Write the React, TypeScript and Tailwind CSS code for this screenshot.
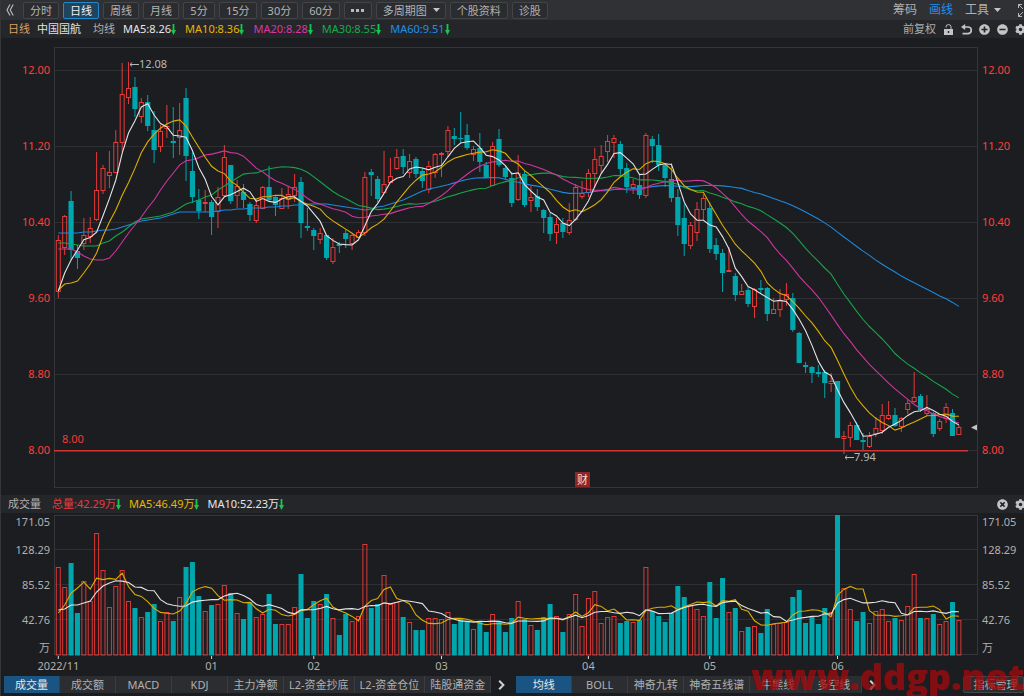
import React from 'react';
import { FaPlusCircle, FaMinusCircle, FaTimesCircle, FaCog } from 'react-icons/fa';

// [dir, high, body top, body bottom, low], all in chart units (95 units = 1.00 yuan, 12.00 sits at 70)
type Candle = [number, number, number, number, number];

const candles: Candle[] = [
  [1, 235, 240, 291, 298], [1, 215, 216, 247, 255], [-1, 191, 201, 250, 260], [-1, 245, 251, 258, 269],
  [1, 218, 235, 243, 250], [1, 217, 228, 236, 243], [1, 152, 190, 219, 221], [1, 165, 168, 190, 194],
  [1, 151, 172, 175, 188], [1, 130, 142, 172, 173], [1, 63, 94, 142, 152], [1, 62, 88, 97, 104],
  [-1, 77, 87, 109, 117], [1, 98, 102, 116, 123], [-1, 95, 102, 126, 131], [-1, 111, 130, 150, 163],
  [1, 125, 131, 146, 152], [1, 105, 126, 128, 138], [-1, 107, 141, 143, 158], [1, 103, 130, 137, 155],
  [-1, 88, 98, 156, 181], [-1, 150, 171, 197, 203], [-1, 189, 200, 211, 219], [1, 190, 202, 203, 212],
  [-1, 200, 202, 217, 235], [1, 187, 197, 211, 228], [1, 145, 157, 195, 197], [-1, 165, 165, 201, 204],
  [1, 180, 186, 195, 208], [-1, 184, 192, 200, 208], [-1, 202, 204, 215, 221], [1, 200, 205, 220, 223],
  [1, 186, 187, 208, 208], [-1, 166, 187, 200, 202], [-1, 196, 197, 205, 216], [1, 188, 198, 208, 208],
  [1, 186, 194, 199, 209], [1, 174, 187, 195, 202], [-1, 177, 182, 223, 238], [-1, 208, 226, 228, 231],
  [-1, 228, 230, 236, 250], [1, 228, 233, 239, 244], [-1, 235, 235, 258, 260], [1, 238, 247, 261, 264],
  [-1, 242, 244, 246, 253], [-1, 230, 233, 239, 248], [1, 234, 235, 243, 250], [1, 230, 232, 237, 238],
  [1, 172, 177, 232, 236], [-1, 169, 172, 175, 196], [-1, 176, 179, 199, 202], [1, 151, 184, 192, 193],
  [1, 158, 176, 182, 182], [1, 149, 157, 168, 170], [-1, 149, 156, 167, 174], [1, 154, 161, 172, 178],
  [-1, 157, 159, 174, 178], [-1, 168, 171, 181, 188], [1, 161, 166, 189, 193], [1, 153, 154, 172, 178],
  [1, 152, 153, 154, 177], [1, 126, 130, 151, 157], [-1, 128, 136, 139, 145], [-1, 112, 138, 139, 143],
  [-1, 124, 135, 148, 150], [1, 146, 149, 154, 161], [-1, 133, 148, 162, 172], [-1, 162, 165, 178, 178],
  [1, 142, 146, 185, 185], [-1, 129, 139, 165, 167], [-1, 165, 168, 177, 180], [-1, 172, 178, 203, 207],
  [1, 155, 173, 199, 201], [-1, 170, 174, 205, 207], [1, 186, 197, 200, 212], [-1, 189, 196, 207, 211],
  [-1, 209, 210, 218, 233], [-1, 213, 217, 234, 241], [1, 218, 224, 232, 244], [-1, 218, 223, 232, 238],
  [1, 203, 220, 232, 235], [1, 184, 187, 219, 221], [1, 181, 193, 196, 199], [1, 169, 173, 192, 197],
  [1, 148, 159, 173, 188], [1, 145, 156, 165, 173], [1, 135, 141, 151, 162], [1, 135, 138, 142, 158],
  [-1, 141, 144, 169, 175], [-1, 163, 168, 187, 193], [1, 179, 184, 187, 194], [-1, 175, 185, 195, 199],
  [1, 133, 135, 195, 198], [-1, 136, 139, 146, 163], [-1, 134, 145, 165, 171], [-1, 163, 165, 178, 187],
  [-1, 163, 179, 198, 202], [-1, 189, 197, 225, 236], [-1, 204, 218, 244, 256], [1, 222, 225, 245, 249],
  [1, 202, 209, 232, 241], [1, 194, 198, 209, 220], [-1, 202, 208, 249, 253], [-1, 238, 245, 254, 260],
  [-1, 249, 253, 273, 292], [1, 247, 270, 271, 271], [-1, 273, 276, 295, 301], [1, 284, 291, 294, 294],
  [-1, 287, 290, 304, 307], [1, 288, 289, 306, 318], [-1, 280, 288, 290, 293], [-1, 287, 288, 314, 321],
  [1, 298, 309, 313, 314], [1, 289, 300, 309, 317], [1, 283, 294, 299, 306], [-1, 293, 298, 330, 332],
  [-1, 332, 333, 363, 363], [-1, 362, 365, 367, 373], [-1, 366, 367, 373, 383], [-1, 365, 372, 374, 377],
  [-1, 370, 372, 383, 398], [1, 373, 381, 383, 392], [-1, 381, 381, 438, 438], [1, 431, 436, 438, 454],
  [1, 422, 425, 437, 447], [-1, 422, 425, 440, 440], [-1, 433, 440, 442, 450], [1, 432, 436, 446, 448],
  [1, 417, 428, 433, 437], [1, 404, 415, 430, 434], [1, 401, 415, 418, 420], [-1, 408, 415, 426, 427],
  [1, 417, 418, 426, 432], [1, 400, 403, 409, 414], [1, 372, 397, 401, 403], [-1, 394, 396, 410, 412],
  [1, 395, 409, 413, 416], [-1, 412, 413, 434, 437], [1, 419, 421, 428, 431], [1, 403, 407, 418, 423],
  [-1, 409, 413, 436, 436], [1, 425, 427, 434, 435],
];

// top edge of each volume bar, the base line sits at 655
const volumes = [
  567, 587, 563, 613, 581, 601, 533, 570, 607, 586, 570, 601, 608, 617, 612, 604, 621, 612, 621, 597,
  567, 562, 596, 611, 605, 604, 585, 593, 613, 619, 602, 617, 614, 594, 624, 624, 624, 607, 574, 618,
  601, 604, 594, 618, 635, 614, 621, 616, 544, 608, 604, 575, 604, 602, 617, 622, 630, 630, 618, 618,
  619, 612, 624, 619, 622, 629, 622, 632, 614, 621, 632, 618, 601, 619, 625, 630, 617, 604, 616, 632,
  614, 594, 626, 598, 591, 623, 617, 616, 623, 621, 622, 620, 567, 611, 616, 622, 613, 586, 597, 605,
  609, 616, 582, 618, 578, 612, 608, 631, 627, 626, 633, 609, 624, 623, 622, 597, 590, 623, 617, 624,
  608, 612, 515, 588, 609, 621, 612, 623, 611, 609, 621, 618, 620, 606, 574, 618, 618, 614, 624, 621,
  602, 620,
];

// average values for the days that come before a full window is available
const lead5 = [291, 273, 260, 250];
const lead10 = [290, 284, 283, 281, 273, 264, 253, 236, 222];
const lead20 = [249, 249, 249, 252, 256, 259, 260, 260, 258, 251, 242, 233, 225, 217, 208, 200, 190, 181, 173];
const lead30 = [
  243, 243, 244, 245, 246, 246, 246, 243, 241, 236, 232, 227, 222, 219, 218, 217, 216, 214, 212, 208,
  204, 202, 200, 197, 195, 190, 186, 182, 178,
];
const lead60 = [
  233, 233, 233, 233, 232, 232, 231, 230, 230, 229, 227, 225, 223, 221, 220, 219, 218, 216, 214, 212,
  212, 212, 212, 212, 212, 211, 210, 210, 209, 209, 208, 208, 208, 207, 207, 206, 206, 205, 205, 204,
  204, 204, 204, 205, 206, 207, 208, 209, 210, 209, 207, 206, 204, 202, 200, 197, 194, 191, 189,
];
const volLead5 = [613, 605, 593, 588];
const volLead10 = [610, 609, 605, 605, 603, 601, 592, 586, 583];

const WIDTH = 924;
const xAt = (i: number) => 4.3 + i * 6.387;
const pct = (x: number) => `${(x / WIDTH) * 100}%`;

const closes = candles.map(([dir, , top, bottom]) => (dir > 0 ? top : bottom));

const averagePoints = (values: number[], size: number, lead: number[]) =>
  values
    .map((_, i) => {
      const y = i < size - 1
        ? lead[i]
        : values.slice(i - size + 1, i + 1).reduce((a, b) => a + b, 0) / size;
      return `${xAt(i).toFixed(1)},${y.toFixed(1)}`;
    })
    .join(' ');

const priceLines = [
  { color: '#1e88dc', points: averagePoints(closes, 60, lead60) },
  { color: '#16a34a', points: averagePoints(closes, 30, lead30) },
  { color: '#cf35a0', points: averagePoints(closes, 20, lead20) },
  { color: '#dcae00', points: averagePoints(closes, 10, lead10) },
  { color: '#e4e4e4', points: averagePoints(closes, 5, lead5) },
];

const volumeLines = [
  { color: '#dcae00', points: averagePoints(volumes, 5, volLead5) },
  { color: '#e4e4e4', points: averagePoints(volumes, 10, volLead10) },
];

const periods = ['分时', '日线', '周线', '月线', '5分', '15分', '30分', '60分'];
const prices = ['12.00', '11.20', '10.40', '9.60', '8.80', '8.00'];
const months = [
  { label: '2022/11', index: 0 },
  { label: '01', index: 24 },
  { label: '02', index: 40 },
  { label: '03', index: 60 },
  { label: '04', index: 83 },
  { label: '05', index: 102 },
  { label: '06', index: 122 },
];
const averages = [
  { label: 'MA5:8.26', color: 'text-[#e6e6e6]' },
  { label: 'MA10:8.36', color: 'text-[#e6b800]' },
  { label: 'MA20:8.28', color: 'text-[#d936a8]' },
  { label: 'MA30:8.55', color: 'text-[#17ab4c]' },
  { label: 'MA60:9.51', color: 'text-[#2090e6]' },
];
const volumeAverages = [
  { label: '总量:42.29万', color: 'text-[#ee3b39]' },
  { label: 'MA5:46.49万', color: 'text-[#e6b800]' },
  { label: 'MA10:52.23万', color: 'text-[#e6e6e6]' },
];
const volumeTabs = ['成交量', '成交额', 'MACD', 'KDJ', '主力净额', 'L2-资金抄底', 'L2-资金仓位', '陆股通资金'];
const priceTabs = ['均线', 'BOLL', '神奇九转', '神奇五线谱', '牛熊线', '多空线'];

const DownArrow: React.FC = () => (
  <svg className="w-[5px] h-[11px]" viewBox="0 0 5 11">
    <path d="M1.6 0h1.8v6H5L2.5 11 0 6h1.6z" fill="#12c94e" />
  </svg>
);

const Caret: React.FC<{ className?: string }> = ({ className }) => (
  <svg className={`w-[7px] h-1 ${className ?? ''}`} viewBox="0 0 7 4">
    <path d="M0 0h7L3.5 4z" fill="#c4c4c4" />
  </svg>
);

const ChevronButton: React.FC<{ label: string }> = ({ label }) => (
  <button aria-label={label} className="w-[25px] shrink-0 flex items-center justify-center">
    <svg className="w-[7px] h-[10px] -ml-1" viewBox="0 0 7 10">
      <path d="M1.2 0.8L5.4 5 1.2 9.2" fill="none" stroke="#d0d0d0" strokeWidth="2" />
    </svg>
  </button>
);

const Readout: React.FC<{ label: string; color: string }> = ({ label, color }) => (
  <div className={`flex items-center ${color}`}>
    <span>{label}</span>
    <DownArrow />
  </div>
);

const Tab: React.FC<{ label: string; active: boolean }> = ({ label, active }) => (
  <button
    className={`min-w-14 px-[5px] whitespace-nowrap border-r border-[#3b3c3f] ${
      active ? 'bg-[#1a5482] text-[#e8e8e8]' : 'bg-[#2c2d30] text-[#b0b0b0]'
    }`}
  >
    {label}
  </button>
);

const PriceChart: React.FC = () => (
  <div className="relative flex-1 min-w-0">
    <svg className="block w-full h-[441px]" viewBox={`0 47 ${WIDTH} 441`} preserveAspectRatio="none">
      {[70.5, 146.5, 222.5, 298.5, 374.5, 450.5].map(y => (
        <line key={y} x1="0" x2={WIDTH} y1={y} y2={y} stroke="#2e2f32" />
      ))}
      <rect x="0.5" y="47.5" width={WIDTH - 1} height="440" fill="none" stroke="#35363a" />
      {candles.map(([dir, high, top, bottom, low], i) => {
        const x = xAt(i);
        return dir > 0 ? (
          <g key={i} stroke="#e83a38" fill="none">
            <path d={`M${x} ${high}V${top}M${x} ${bottom}V${low}`} />
            <rect x={x - 2} y={top + 0.5} width="4" height={Math.max(bottom - top, 1)} />
          </g>
        ) : (
          <g key={i} fill="#00a6ae">
            <path d={`M${x} ${high}V${low}`} stroke="#00a6ae" />
            <rect x={x - 2.6} y={top} width="5.2" height={Math.max(bottom - top, 1)} />
          </g>
        );
      })}
      {priceLines.map(line => (
        <polyline key={line.color} points={line.points} fill="none" stroke={line.color} strokeWidth="1.1" />
      ))}
      <line x1="0" x2="914" y1="450.7" y2="450.7" stroke="#d03535" strokeWidth="1.4" />
      <path d="M917 427.5l6-3v6z" fill="#c4c4c4" />
    </svg>
    {/* High / low markers */}
    <div className="absolute top-[9px] flex items-center text-[#b8b8b8] leading-4" style={{ left: pct(75) }}>
      <svg className="w-[10px] h-[5px]" viewBox="0 0 10 5">
        <path d="M10 2.5H1M3.2 0.4L1 2.5l2.2 2.1" fill="none" stroke="#b8b8b8" />
      </svg>
      12.08
    </div>
    <div className="absolute bottom-[23px] flex items-center text-[#b8b8b8] leading-4" style={{ left: pct(790) }}>
      <svg className="w-[10px] h-[5px]" viewBox="0 0 10 5">
        <path d="M10 2.5H1M3.2 0.4L1 2.5l2.2 2.1" fill="none" stroke="#b8b8b8" />
      </svg>
      7.94
    </div>
    <div className="absolute bottom-[41px] left-2 text-[#ee3b39] leading-4">8.00</div>
    <button
      className="absolute bottom-px w-[15px] h-[15px] bg-[#8e2527] text-[#f0dede] leading-[15px] text-center"
      style={{ left: pct(521) }}
    >
      财
    </button>
  </div>
);

const VolumeChart: React.FC = () => (
  <div className="flex-1 min-w-0">
    <svg className="block w-full h-[146px]" viewBox={`0 514 ${WIDTH} 146`} preserveAspectRatio="none">
      {[549.5, 584.5, 619.5].map(y => (
        <line key={y} x1="0" x2={WIDTH} y1={y} y2={y} stroke="#2e2f32" />
      ))}
      <rect x="0.5" y="515.5" width={WIDTH - 1} height="139" fill="none" stroke="#35363a" />
      {volumes.map((top, i) =>
        candles[i][0] > 0 ? (
          <rect key={i} x={xAt(i) - 2} y={top + 0.5} width="4" height={654.5 - top} fill="none" stroke="#dd3836" />
        ) : (
          <rect key={i} x={xAt(i) - 2.5} y={top} width="5" height={655.5 - top} fill="#00a6ae" />
        )
      )}
      {volumeLines.map(line => (
        <polyline key={line.color} points={line.points} fill="none" stroke={line.color} strokeWidth="1.1" />
      ))}
      {months.map(({ label, index }) => (
        <line key={label} x1={xAt(index)} x2={xAt(index)} y1="656" y2="659" stroke="#d8d8d8" />
      ))}
    </svg>
  </div>
);

const VolumeScale: React.FC<{ className: string }> = ({ className }) => (
  <div className={`shrink-0 flex flex-col leading-4 text-[#b0b0b0] ${className}`}>
    <span>171.05</span>
    <span className="mt-3">128.29</span>
    <span className="mt-[19px]">85.52</span>
    <span className="mt-[19px]">42.76</span>
    <span className="mt-3">万</span>
  </div>
);

const App: React.FC = () => (
  <div className="relative min-h-screen overflow-hidden border-l border-[#35363a] bg-[#1c1d20] text-[11px] text-[#b0b0b0] font-['Noto_Sans','Noto_Sans_CJK_SC',sans-serif]">
    {/* Period toolbar */}
    <div className="h-5 flex items-center gap-1 bg-[#303134] overflow-hidden">
      <button aria-label="收起" className="w-[18px] shrink-0 flex justify-center">
        <svg className="w-2 h-3" viewBox="0 0 8 12">
          <path d="M4 0.5L1 6l3 5.5M7.2 0.5L4.2 6l3 5.5" fill="none" stroke="#c0c0c0" strokeWidth="1.1" />
        </svg>
      </button>
      {periods.map(period => (
        <button
          key={period}
          className={`h-[17px] min-w-8 shrink-0 px-1.5 border rounded-[2px] leading-[15px] ${
            period === '日线'
              ? 'bg-[#20435e] border-[#2188d0] text-[#f0f0f0]'
              : 'bg-[#2b2c2f] border-[#434447] text-[#b4b4b4]'
          }`}
        >
          {period}
        </button>
      ))}
      <button
        aria-label="更多周期"
        className="h-[17px] w-7 shrink-0 flex items-center justify-center gap-0.5 border border-[#434447] rounded-[2px] bg-[#2b2c2f]"
      >
        <span className="w-[3px] h-[3px] bg-[#b8b8b8]" />
        <span className="w-[3px] h-[3px] bg-[#b8b8b8]" />
        <span className="w-[3px] h-[3px] bg-[#b8b8b8]" />
      </button>
      <div className="relative shrink-0 flex items-center">
        <select
          aria-label="多周期图"
          className="h-[17px] w-[70px] px-1.5 appearance-none border border-[#434447] rounded-[2px] bg-[#2b2c2f] leading-[15px] text-[#b4b4b4]"
        >
          <option>多周期图</option>
        </select>
        <Caret className="absolute right-1.5 pointer-events-none" />
      </div>
      <button className="h-[17px] shrink-0 px-1.5 border border-[#434447] rounded-[2px] bg-[#2b2c2f] leading-[15px]">个股资料</button>
      <button className="h-[17px] shrink-0 px-1.5 border border-[#434447] rounded-[2px] bg-[#2b2c2f] leading-[15px]">诊股</button>
      <div className="ml-auto shrink-0 flex items-center text-xs">
        <button className="mr-3">筹码</button>
        <button className="mr-3 text-[#1e90e8]">画线</button>
        <div className="relative flex items-center">
          <select aria-label="工具" className="w-9 appearance-none leading-4">
            <option>工具</option>
          </select>
          <Caret className="absolute right-0 pointer-events-none" />
        </div>
        <button aria-label="全屏" className="ml-4 -mr-2">
          <svg className="w-[15px] h-[15px]" viewBox="0 0 15 15">
            <path
              d="M1.5 5V1.5H5M1.5 1.5L6 6M10 1.5h3.5V5M13.5 1.5L9 6M1.5 10v3.5H5M1.5 13.5L6 9M10 13.5h3.5V10M13.5 13.5L9 9"
              fill="none"
              stroke="#b8b8b8"
            />
          </svg>
        </button>
      </div>
    </div>

    {/* Price averages */}
    <div className="h-[18px] pl-[7px] flex items-center bg-[#25262a] overflow-hidden">
      <span className="text-[#d9a066]">日线</span>
      <span className="ml-[7px] text-[#e0e0e0]">中国国航</span>
      <span className="ml-3">均线</span>
      <div className="ml-2 flex gap-[9px]">
        {averages.map(item => <Readout key={item.label} {...item} />)}
      </div>
      <div className="ml-auto -mr-0.5 flex items-center gap-[7px] text-[#c4c4c4] text-[11px]">
        <button className="text-[#b0b0b0]">前复权</button>
        <button aria-label="锁定">
          <svg className="w-[11px] h-[11px]" viewBox="0 0 11 11">
            <path d="M3 3.5V2.8a2.5 2.2 0 0 1 5 0V5" fill="none" stroke="#c4c4c4" />
            <path d="M1 5h9v6H1zM4.8 7v2h1.4V7z" fill="#c4c4c4" fillRule="evenodd" />
          </svg>
        </button>
        <button aria-label="撤销">
          <svg className="w-[11px] h-[11px]" viewBox="0 0 11 11">
            <path d="M2 3h5a3.2 3.2 0 0 1 0 6.6H1.5" fill="none" stroke="#c4c4c4" strokeWidth="1.7" />
            <path d="M0 3l4.2-3v6z" fill="#c4c4c4" />
          </svg>
        </button>
        <button aria-label="放大"><FaPlusCircle /></button>
        <button aria-label="缩小"><FaMinusCircle /></button>
        <button aria-label="设置"><FaCog /></button>
      </div>
    </div>

    {/* Candlestick chart */}
    <div className="flex pt-[9px] pb-[7px]">
      <div className="w-[53px] shrink-0 pt-[15px] pr-1 flex flex-col gap-[60px] items-end leading-4 text-[#ff3f3c]">
        {prices.map(price => <span key={price}>{price}</span>)}
      </div>
      <PriceChart />
      <div className="w-[46px] shrink-0 pt-[15px] pl-1 flex flex-col gap-[60px] items-start leading-4 text-[#ff3f3c]">
        {prices.map(price => <span key={price}>{price}</span>)}
      </div>
    </div>

    {/* Volume header */}
    <div className="h-[18px] pl-[7px] flex items-center bg-[#25262a] overflow-hidden">
      <span>成交量</span>
      <div className="ml-[11px] flex gap-2">
        {volumeAverages.map(item => <Readout key={item.label} {...item} />)}
      </div>
      <div className="ml-auto -mr-0.5 flex items-center gap-[7px] text-[#c4c4c4]">
        <button aria-label="关闭"><FaTimesCircle /></button>
        <button aria-label="设置"><FaCog /></button>
      </div>
    </div>

    {/* Volume chart */}
    <div className="flex pt-px">
      <VolumeScale className="w-[53px] pr-1 items-end" />
      <VolumeChart />
      <VolumeScale className="w-[46px] pl-1 items-start" />
    </div>
    <div className="h-4 ml-[53px] mr-[46px] relative leading-3">
      {months.map(({ label, index }) => (
        <span key={label} className="absolute -translate-x-1/2" style={{ left: pct(xAt(index)) }}>
          {label}
        </span>
      ))}
    </div>

    {/* Indicator tabs */}
    <div className="h-[17px] pl-[3px] flex leading-[17px]">
      {volumeTabs.map((tab, i) => <Tab key={tab} label={tab} active={i === 0} />)}
      <ChevronButton label="更多副图指标" />
      {priceTabs.map((tab, i) => <Tab key={tab} label={tab} active={i === 0} />)}
      <ChevronButton label="更多主图指标" />
      <button className="ml-auto w-[61px] shrink-0 pl-1 border border-[#45464a] rounded-[2px] bg-[#2c2d30] leading-[15px]">
        指标管理
      </button>
    </div>

    {/* Site watermark */}
    <div className="absolute right-0 bottom-0 leading-[38px] text-[36px] font-extrabold text-[#a50a0d] opacity-75 pointer-events-none font-['Open_Sans',sans-serif]">
      www.ddgp.net
    </div>
  </div>
);

export default App;
